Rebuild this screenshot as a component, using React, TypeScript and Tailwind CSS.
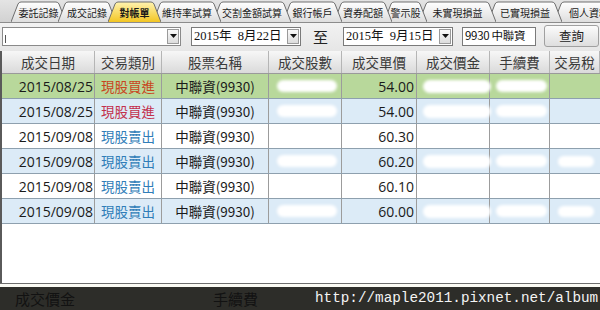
import React from "react";

const CJK = "font-['Microsoft_JhengHei','Noto_Sans_CJK_TC',sans-serif]";

const TABS = [
  { label: "委託記錄", w: 47 },
  { label: "成交記錄", w: 50 },
  { label: "對帳單", w: 45, active: true },
  { label: "維持率試算", w: 60 },
  { label: "交割金額試算", w: 70 },
  { label: "銀行帳戶", w: 51 },
  { label: "資券配額", w: 50 },
  { label: "警示股", w: 35 },
  { label: "未實現損益", w: 69 },
  { label: "已實現損益", w: 66 },
  { label: "個人資料", w: 62 },
];

const COLS = [
  { title: "成交日期", w: "w-[93px]" },
  { title: "交易類別", w: "w-[67px]" },
  { title: "股票名稱", w: "w-[107px]" },
  { title: "成交股數", w: "w-[73px]" },
  { title: "成交單價", w: "w-[75px]" },
  { title: "成交價金", w: "w-[73px]" },
  { title: "手續費", w: "w-[60px]" },
  { title: "交易稅", w: "flex-1" },
];

type Row = { date: string; kind: string; color: string; price: string; bg: string };

const ROWS: Row[] = [
  { date: "2015/08/25", kind: "現股買進", color: "text-[#c8461e]", price: "54.00", bg: "bg-[#b8d89b]" },
  { date: "2015/08/25", kind: "現股買進", color: "text-[#c3304c]", price: "54.00", bg: "bg-[#dcebf7]" },
  { date: "2015/09/08", kind: "現股賣出", color: "text-[#2f7db8]", price: "60.30", bg: "bg-white" },
  { date: "2015/09/08", kind: "現股賣出", color: "text-[#2f7db8]", price: "60.20", bg: "bg-[#dcebf7]" },
  { date: "2015/09/08", kind: "現股賣出", color: "text-[#2f7db8]", price: "60.10", bg: "bg-white" },
  { date: "2015/09/08", kind: "現股賣出", color: "text-[#2f7db8]", price: "60.00", bg: "bg-[#dcebf7]" },
];

function Tab({ label, w, active, z }: { label: string; w: number; active?: boolean; z: number }) {
  const W = w + 8;
  const path = `M0,21 L7,3 Q8,1 10,1 L${W - 10},1 Q${W - 8},1 ${W - 7},3 L${W},21`;
  return (
    <div className="relative -ml-[8px] h-[21px] shrink-0 first:ml-[11px]" style={{ width: W, zIndex: z }}>
      <svg className="absolute inset-0" width={W} height={21}>
        <defs>
          <linearGradient id={`g-${label}`} x1="0" y1="0" x2="0" y2="1">
            <stop offset="0" stopColor={active ? "#fff3b0" : "#ffffff"} />
            <stop offset="1" stopColor={active ? "#f3c623" : "#dedede"} />
          </linearGradient>
        </defs>
        <path d={path} fill={`url(#g-${label})`} stroke="#6e6e6e" strokeWidth="1" />
      </svg>
      <span
        className={`relative flex h-full items-center justify-center pt-[2px] text-[10px] leading-none text-[#1a1a1a] ${
          active ? "font-bold" : ""
        }`}
      >
        {label}
      </span>
    </div>
  );
}

function DropBtn() {
  return (
    <div className="flex h-[15px] w-[12px] items-center justify-center border border-[#9a9a9a] bg-gradient-to-b from-[#fafafa] to-[#dcdcdc]">
      <svg width="7" height="4" viewBox="0 0 7 4">
        <path d="M0,0 L7,0 L3.5,4 Z" fill="#111" />
      </svg>
    </div>
  );
}

function DateBox({ text, w }: { text: string; w: string }) {
  return (
    <div className={`flex h-[19px] ${w} items-center justify-between border border-[#7a7a7a] bg-white pl-[2px] pr-[1px]`}>
      <span className="whitespace-pre font-['Liberation_Serif','Noto_Sans_CJK_TC',serif] text-[12.5px] leading-none text-[#111]">
        {text}
      </span>
      <DropBtn />
    </div>
  );
}

function Blot({ cls }: { cls: string }) {
  return <div className={`absolute rounded-full bg-white blur-[1.5px] ${cls}`} />;
}

export default function App() {
  const activeIdx = TABS.findIndex((t) => t.active);
  return (
    <div className={`flex h-[310px] w-[600px] flex-col overflow-hidden bg-[#ececec] ${CJK}`}>
      {/* tab strip */}
      <div className="flex h-[23px] items-end overflow-hidden border-b border-[#8c8c8c] bg-gradient-to-b from-[#e4e4e4] to-[#d2d2d2]">
        {TABS.map((t, i) => (
          <Tab key={t.label} {...t} z={i === activeIdx ? 50 : i < activeIdx ? i + 1 : 40 - i} />
        ))}
      </div>

      {/* filter row */}
      <div className="flex h-[28px] items-center bg-gradient-to-b from-[#f2f2f2] to-[#e6e6e6] pb-[2px]">
        <div className="ml-[2px] flex h-[19px] w-[179px] items-center justify-between border border-[#8a8a8a] bg-white pr-[1px]">
          <span className="ml-[2px] h-[8px] w-px bg-[#555] mt-[6px]" />
          <DropBtn />
        </div>
        <div className="ml-[10px]">
          <DateBox text="2015年  8月22日" w="w-[110px]" />
        </div>
        <span className="ml-[12px] text-[15px] leading-none text-[#222]">至</span>
        <div className="ml-[15px]">
          <DateBox text="2015年  9月15日" w="w-[110px]" />
        </div>
        <div className="ml-[9px] flex h-[19px] w-[74px] items-center border border-[#7a7a7a] bg-white pl-[2px]">
          <span className="text-[11.5px] leading-none tracking-[-0.3px] text-[#111]">9930 中聯資</span>
        </div>
        <button className="ml-[8px] flex h-[22px] w-[55px] items-center justify-center rounded-[3px] border border-[#a0a0a0] bg-gradient-to-b from-[#fbfbfb] to-[#dedede] text-[12.5px] text-[#222]">
          查詢
        </button>
      </div>

      {/* grid */}
      <div className="flex flex-1 flex-col border-l-2 border-[#5a5a5a] bg-white">
        <div className="flex h-[23px] border-b border-[#9a9a9a] bg-gradient-to-b from-[#f7f7f7] to-[#dadada]">
          {COLS.map((c) => (
            <div
              key={c.title}
              className={`${c.w} flex shrink-0 items-center justify-center whitespace-nowrap border-r border-[#b5b5b5] text-[13.5px] text-[#3a3a3a]`}
            >
              {c.title}
            </div>
          ))}
        </div>
        {ROWS.map((r, i) => (
          <div key={i} className={`flex h-[25px] border-b border-[#8ea0ae] ${r.bg} text-[13.5px]`}>
            <div className="flex w-[93px] shrink-0 items-center justify-end border-r border-[#9c9c9c] pr-[1px] font-['Segoe_UI','Open_Sans',sans-serif] text-[14px] text-[#1a1a1a]">
              {r.date}
            </div>
            <div className={`flex w-[67px] shrink-0 items-center justify-center border-r border-[#9c9c9c] ${r.color}`}>
              {r.kind}
            </div>
            <div className="flex w-[107px] shrink-0 items-center justify-center border-r border-[#9c9c9c] text-[#1a1a1a]">
              中聯資(9930)
            </div>
            <div className="relative w-[73px] shrink-0 border-r border-[#9c9c9c]">
              {r.bg !== "bg-white" && <Blot cls="left-[8px] right-[4px] top-[6px] h-[12px]" />}
            </div>
            <div className="flex w-[75px] shrink-0 items-center justify-end border-r border-[#9c9c9c] pr-[2px] font-['Segoe_UI','Open_Sans',sans-serif] text-[14px] text-[#1a1a1a]">
              {r.price}
            </div>
            <div className="relative w-[73px] shrink-0 border-r border-[#9c9c9c]">
              {r.bg !== "bg-white" && <Blot cls="left-[6px] right-[-2px] top-[6px] h-[13px]" />}
            </div>
            <div className="relative w-[60px] shrink-0 border-r border-[#9c9c9c]">
              {r.bg !== "bg-white" && <Blot cls="left-[6px] right-[2px] top-[6px] h-[12px]" />}
            </div>
            <div className="relative flex-1">
              {i > 2 && r.bg !== "bg-white" && <Blot cls="left-[8px] right-[6px] top-[7px] h-[11px]" />}
            </div>
          </div>
        ))}
        <div className="flex-1" />
      </div>

      {/* status strip */}
      <div className="h-px bg-[#6e6e6e]" />
      <div className="h-[3px] bg-[#fbfbf4]" />
      <div className="flex h-[23px] items-center bg-[#2d2d29]">
        <span className="ml-[15px] text-[15px] leading-none text-[#121212]">成交價金</span>
        <span className="ml-[138px] text-[15px] leading-none text-[#121212]">手續費</span>
        <span className="ml-[57px] font-['Liberation_Mono','Courier_New',monospace] text-[14.3px] leading-none text-[#f4f4f4]">
          http://maple2011.pixnet.net/album
        </span>
      </div>
    </div>
  );
}
